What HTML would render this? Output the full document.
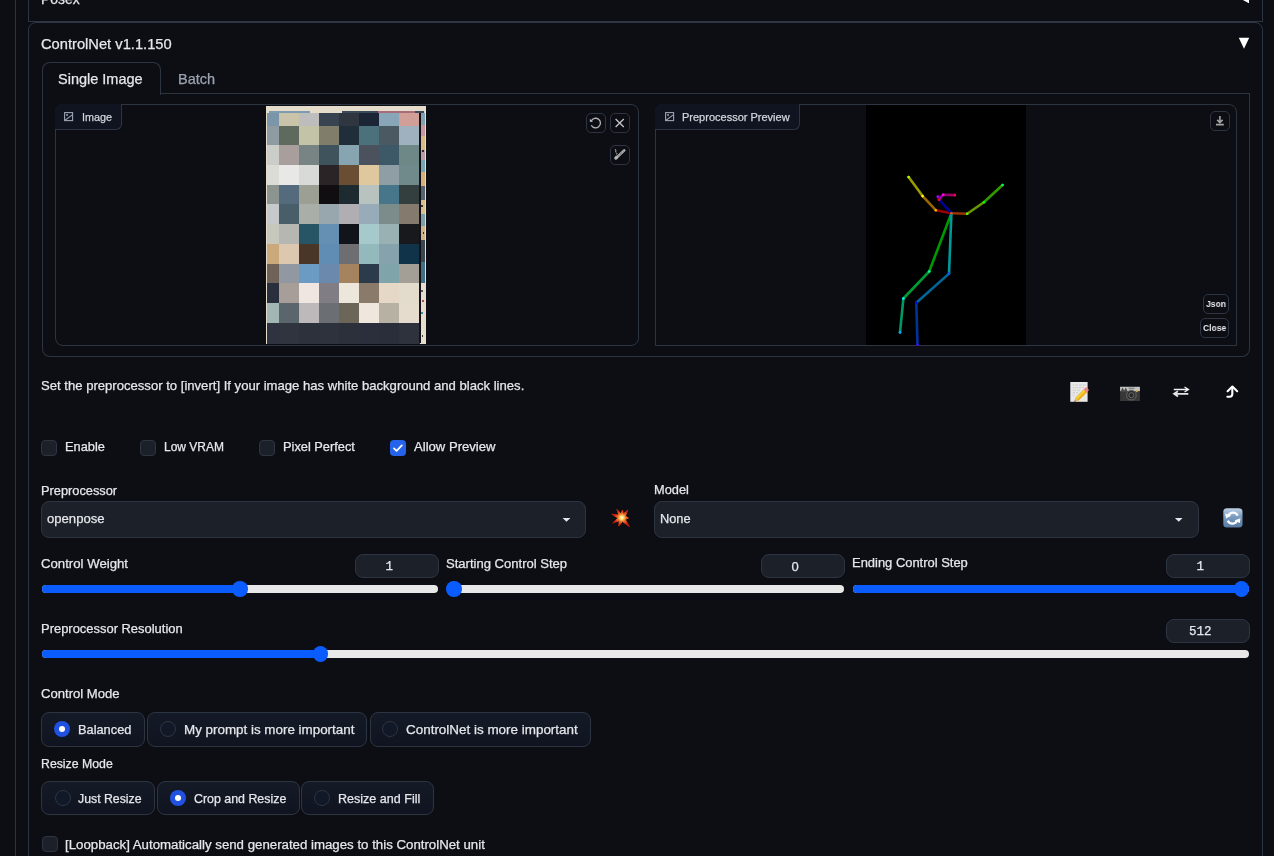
<!DOCTYPE html>
<html><head><meta charset="utf-8">
<style>
*{box-sizing:border-box;margin:0;padding:0}
html,body{width:1274px;height:856px;overflow:hidden;background:#0c0e14}
body{position:relative;font-family:"Liberation Sans",sans-serif;color:#e5e7eb}
.a{position:absolute}
.t{position:absolute;white-space:nowrap;line-height:1;-webkit-text-stroke:0.25px currentColor;will-change:transform}
svg{overflow:visible}
</style></head><body>
<div class="a" style="left:15.0px;top:-10.0px;width:1.0px;height:910.0px;background:#2e3542"></div>
<div class="a" style="left:28.0px;top:-60.0px;width:1235.0px;height:82.0px;border:1px solid #2e3542"></div>
<div class="t" style="left:40.8px;top:-7.5px;font-size:13.9px;color:#e5e7eb;font-weight:400;font-family:'Liberation Sans',sans-serif;">Posex</div>
<svg class="a" style="left:1230px;top:-10px" width="25" height="20" viewBox="1230 -10 25 20"><polygon points="1249,-7 1249,3.2 1239,-2" fill="#fff"/></svg>
<div class="a" style="left:28.0px;top:22.0px;width:1235.0px;height:938.0px;border:1px solid #2e3542;border-radius:8px"></div>
<div class="t" style="left:40.8px;top:36.8px;font-size:14.7px;color:#e5e7eb;font-weight:400;font-family:'Liberation Sans',sans-serif;">ControlNet v1.1.150</div>
<svg class="a" style="left:1230px;top:30px" width="30" height="25" viewBox="1230 30 30 25"><polygon points="1238.8,37.7 1249.2,37.7 1244,48.7" fill="#fff"/></svg>
<div class="a" style="left:41.5px;top:62.0px;width:119.5px;height:32.5px;border:1px solid #2e3542;border-bottom:none;border-radius:8px 8px 0 0;background:#0c0e14"></div>
<div class="a" style="left:160.0px;top:93.0px;width:1090.0px;height:1.0px;background:#2e3542"></div>
<div class="t" style="left:58.3px;top:72.0px;font-size:14.5px;color:#e5e7eb;font-weight:400;font-family:'Liberation Sans',sans-serif;">Single Image</div>
<div class="t" style="left:177.8px;top:72.0px;font-size:14.5px;color:#9ca3af;font-weight:400;font-family:'Liberation Sans',sans-serif;">Batch</div>
<div class="a" style="left:41.5px;top:93.5px;width:1208.5px;height:263.5px;border:1px solid #2e3542;border-top:none;border-radius:0 0 8px 8px"></div>
<div class="a" style="left:54.5px;top:104.0px;width:584.5px;height:242.0px;border:1px solid #2e3542;border-radius:8px;overflow:hidden"></div>
<div class="a" style="left:54.5px;top:104.0px;width:67.5px;height:26.0px;border:1px solid #2e3542;border-top:none;border-left:none;border-radius:8px 0 6px 0;background:#0f1420"></div>
<svg class="a" style="left:63px;top:111px" width="12" height="12" viewBox="63 111 12 12"><rect x="64.6" y="112.6" width="8" height="8" fill="none" stroke="#9ca3af" stroke-width="1.1"/><rect x="66.2" y="114.1" width="1.7" height="1.7" fill="#9ca3af"/><path d="M65 120.2 L72.3 114.9" stroke="#9ca3af" stroke-width="1.1"/></svg>
<div class="t" style="left:82.2px;top:111.9px;font-size:10.8px;color:#d1d5db;font-weight:400;font-family:'Liberation Sans',sans-serif;">Image</div>
<svg class="a" style="left:266px;top:105px" width="161" height="240" viewBox="266 105 161 240" shape-rendering="crispEdges"><rect x="266" y="105.5" width="160" height="238" fill="#e6dccb"/><rect x="267.4" y="112.8" width="11.9" height="13.1" fill="#7b96a8"/><rect x="279" y="112.8" width="20.4" height="13.1" fill="#c9c3aa"/><rect x="299.1" y="112.8" width="20.3" height="13.1" fill="#bdbdbd"/><rect x="319.1" y="112.8" width="20.3" height="13.1" fill="#37444f"/><rect x="339.1" y="112.8" width="20.3" height="13.1" fill="#303640"/><rect x="359.1" y="112.8" width="20.3" height="13.1" fill="#1b2535"/><rect x="379.1" y="112.8" width="20.3" height="13.1" fill="#88a6b8"/><rect x="399.1" y="112.8" width="20.5" height="13.1" fill="#d19e98"/><rect x="267.4" y="125.6" width="11.9" height="20.0" fill="#8e9ba3"/><rect x="279" y="125.6" width="20.4" height="20.0" fill="#5e6a5e"/><rect x="299.1" y="125.6" width="20.3" height="20.0" fill="#c3c3a7"/><rect x="319.1" y="125.6" width="20.3" height="20.0" fill="#807d6b"/><rect x="339.1" y="125.6" width="20.3" height="20.0" fill="#1f2e38"/><rect x="359.1" y="125.6" width="20.3" height="20.0" fill="#4b717c"/><rect x="379.1" y="125.6" width="20.3" height="20.0" fill="#4b5962"/><rect x="399.1" y="125.6" width="20.5" height="20.0" fill="#9fb0bf"/><rect x="267.4" y="145.3" width="11.9" height="20.0" fill="#cbcdc8"/><rect x="279" y="145.3" width="20.4" height="20.0" fill="#a89f9c"/><rect x="299.1" y="145.3" width="20.3" height="20.0" fill="#788484"/><rect x="319.1" y="145.3" width="20.3" height="20.0" fill="#3f535c"/><rect x="339.1" y="145.3" width="20.3" height="20.0" fill="#86a5b1"/><rect x="359.1" y="145.3" width="20.3" height="20.0" fill="#4b525e"/><rect x="379.1" y="145.3" width="20.3" height="20.0" fill="#3d5866"/><rect x="399.1" y="145.3" width="20.5" height="20.0" fill="#6e8888"/><rect x="267.4" y="165.0" width="11.9" height="20.0" fill="#dcdcd6"/><rect x="279" y="165.0" width="20.4" height="20.0" fill="#e8e8e6"/><rect x="299.1" y="165.0" width="20.3" height="20.0" fill="#d8dad8"/><rect x="319.1" y="165.0" width="20.3" height="20.0" fill="#2a2427"/><rect x="339.1" y="165.0" width="20.3" height="20.0" fill="#694e33"/><rect x="359.1" y="165.0" width="20.3" height="20.0" fill="#dfc89e"/><rect x="379.1" y="165.0" width="20.3" height="20.0" fill="#8e9ea4"/><rect x="399.1" y="165.0" width="20.5" height="20.0" fill="#708a8c"/><rect x="267.4" y="184.7" width="11.9" height="20.0" fill="#8c948f"/><rect x="279" y="184.7" width="20.4" height="20.0" fill="#536b7c"/><rect x="299.1" y="184.7" width="20.3" height="20.0" fill="#9c9f93"/><rect x="319.1" y="184.7" width="20.3" height="20.0" fill="#100e11"/><rect x="339.1" y="184.7" width="20.3" height="20.0" fill="#1d2b30"/><rect x="359.1" y="184.7" width="20.3" height="20.0" fill="#b8c2bf"/><rect x="379.1" y="184.7" width="20.3" height="20.0" fill="#47768a"/><rect x="399.1" y="184.7" width="20.5" height="20.0" fill="#333e3e"/><rect x="267.4" y="204.4" width="11.9" height="20.0" fill="#c5c9cb"/><rect x="279" y="204.4" width="20.4" height="20.0" fill="#485f6a"/><rect x="299.1" y="204.4" width="20.3" height="20.0" fill="#a9aea9"/><rect x="319.1" y="204.4" width="20.3" height="20.0" fill="#98a6ae"/><rect x="339.1" y="204.4" width="20.3" height="20.0" fill="#b0adb3"/><rect x="359.1" y="204.4" width="20.3" height="20.0" fill="#97acb8"/><rect x="379.1" y="204.4" width="20.3" height="20.0" fill="#7c8c8a"/><rect x="399.1" y="204.4" width="20.5" height="20.0" fill="#847a6e"/><rect x="267.4" y="224.1" width="11.9" height="20.0" fill="#c6c8bd"/><rect x="279" y="224.1" width="20.4" height="20.0" fill="#b6b7b3"/><rect x="299.1" y="224.1" width="20.3" height="20.0" fill="#285566"/><rect x="319.1" y="224.1" width="20.3" height="20.0" fill="#6590b4"/><rect x="339.1" y="224.1" width="20.3" height="20.0" fill="#11141b"/><rect x="359.1" y="224.1" width="20.3" height="20.0" fill="#a6c9cb"/><rect x="379.1" y="224.1" width="20.3" height="20.0" fill="#9ab1b3"/><rect x="399.1" y="224.1" width="20.5" height="20.0" fill="#18191c"/><rect x="267.4" y="243.8" width="11.9" height="20.0" fill="#cca97a"/><rect x="279" y="243.8" width="20.4" height="20.0" fill="#dcc8ae"/><rect x="299.1" y="243.8" width="20.3" height="20.0" fill="#4a3628"/><rect x="319.1" y="243.8" width="20.3" height="20.0" fill="#5f8db3"/><rect x="339.1" y="243.8" width="20.3" height="20.0" fill="#6e6d72"/><rect x="359.1" y="243.8" width="20.3" height="20.0" fill="#93b9bd"/><rect x="379.1" y="243.8" width="20.3" height="20.0" fill="#86a2ad"/><rect x="399.1" y="243.8" width="20.5" height="20.0" fill="#10334a"/><rect x="267.4" y="263.5" width="11.9" height="20.0" fill="#6f6259"/><rect x="279" y="263.5" width="20.4" height="20.0" fill="#9198a2"/><rect x="299.1" y="263.5" width="20.3" height="20.0" fill="#6b9ac3"/><rect x="319.1" y="263.5" width="20.3" height="20.0" fill="#6b88ad"/><rect x="339.1" y="263.5" width="20.3" height="20.0" fill="#a5835e"/><rect x="359.1" y="263.5" width="20.3" height="20.0" fill="#2b3b4c"/><rect x="379.1" y="263.5" width="20.3" height="20.0" fill="#7fa5aa"/><rect x="399.1" y="263.5" width="20.5" height="20.0" fill="#a39f96"/><rect x="267.4" y="283.2" width="11.9" height="20.0" fill="#2a2f3d"/><rect x="279" y="283.2" width="20.4" height="20.0" fill="#a79e99"/><rect x="299.1" y="283.2" width="20.3" height="20.0" fill="#efe6e1"/><rect x="319.1" y="283.2" width="20.3" height="20.0" fill="#807d84"/><rect x="339.1" y="283.2" width="20.3" height="20.0" fill="#ede6da"/><rect x="359.1" y="283.2" width="20.3" height="20.0" fill="#897a69"/><rect x="379.1" y="283.2" width="20.3" height="20.0" fill="#e5d8c6"/><rect x="399.1" y="283.2" width="20.5" height="20.0" fill="#e3dbcc"/><rect x="267.4" y="302.9" width="11.9" height="20.0" fill="#a2b7b3"/><rect x="279" y="302.9" width="20.4" height="20.0" fill="#5a666c"/><rect x="299.1" y="302.9" width="20.3" height="20.0" fill="#bdb9ba"/><rect x="319.1" y="302.9" width="20.3" height="20.0" fill="#6b6f74"/><rect x="339.1" y="302.9" width="20.3" height="20.0" fill="#6c6658"/><rect x="359.1" y="302.9" width="20.3" height="20.0" fill="#efe7de"/><rect x="379.1" y="302.9" width="20.3" height="20.0" fill="#b7b1a4"/><rect x="399.1" y="302.9" width="20.5" height="20.0" fill="#e6dccd"/><rect x="267.4" y="322.6" width="11.9" height="21.3" fill="#2e333f"/><rect x="279" y="322.6" width="20.4" height="21.3" fill="#30343f"/><rect x="299.1" y="322.6" width="20.3" height="21.3" fill="#2c313b"/><rect x="319.1" y="322.6" width="20.3" height="21.3" fill="#2d323d"/><rect x="339.1" y="322.6" width="20.3" height="21.3" fill="#2b303b"/><rect x="359.1" y="322.6" width="20.3" height="21.3" fill="#2a2f3b"/><rect x="379.1" y="322.6" width="20.3" height="21.3" fill="#292e3a"/><rect x="399.1" y="322.6" width="20.5" height="21.3" fill="#2d323d"/><rect x="269" y="111.2" width="41" height="1.8" fill="#7e9cb0"/><rect x="342" y="111.2" width="82" height="1.8" fill="#3a4a5a"/><rect x="378" y="111.2" width="37" height="1.8" fill="#a86c7a"/><rect x="419.3" y="113" width="1.3" height="230" fill="#141418"/><rect x="420.6" y="113" width="4.2" height="12" fill="#7fa3b2"/><rect x="420.6" y="125" width="4.2" height="11" fill="#c898a2"/><rect x="420.6" y="136" width="4.2" height="14" fill="#d7b98a"/><rect x="420.6" y="150" width="4.2" height="10" fill="#b99ca4"/><rect x="420.6" y="160" width="4.2" height="12" fill="#79a4b3"/><rect x="420.6" y="172" width="4.2" height="14" fill="#d5b27a"/><rect x="420.6" y="186" width="4.2" height="14" fill="#56636e"/><rect x="420.6" y="200" width="4.2" height="14" fill="#d8bf8e"/><rect x="420.6" y="214" width="4.2" height="12" fill="#7e9ea8"/><rect x="420.6" y="226" width="4.2" height="14" fill="#cdb48a"/><rect x="420.6" y="240" width="4.2" height="22" fill="#3b4550"/><rect x="420.6" y="262" width="4.2" height="21" fill="#3f6f84"/><rect x="420.6" y="283" width="4.2" height="60" fill="#e6ddce"/><rect x="424.6" y="111" width="1.4" height="232.6" fill="#e8dccb"/><rect x="421" y="290" width="1.6" height="1.6" fill="#50606a"/><rect x="422" y="300" width="1.6" height="1.6" fill="#a05050"/><rect x="421" y="312" width="1.6" height="1.6" fill="#3a8aa6"/><rect x="421.5" y="335" width="1.6" height="1.6" fill="#404040"/><rect x="422" y="150" width="1.6" height="1.6" fill="#2a2a30"/><rect x="421" y="205" width="1.6" height="1.6" fill="#30343a"/><rect x="422.5" y="232" width="1.6" height="1.6" fill="#2a2e34"/></svg>
<div class="a" style="left:586.0px;top:113.0px;width:20.0px;height:20.0px;border:1px solid #2e3542;border-radius:5px;background:#0c0e14"></div>
<div class="a" style="left:610.0px;top:113.0px;width:20.0px;height:20.0px;border:1px solid #2e3542;border-radius:5px;background:#0c0e14"></div>
<div class="a" style="left:610.0px;top:145.0px;width:20.0px;height:20.0px;border:1px solid #2e3542;border-radius:5px;background:#0c0e14"></div>
<svg class="a" style="left:586px;top:113px" width="20" height="20" viewBox="0 0 20 20"><path d="M5.3 8.0 A4.8 4.8 0 1 1 5.34 12.2" fill="none" stroke="#b4b4bb" stroke-width="1.3"/><polygon points="3.9,5.8 3.9,9.0 7.0,8.8" fill="#b4b4bb"/></svg>
<svg class="a" style="left:610px;top:113px" width="20" height="20" viewBox="0 0 20 20"><path d="M5.6 6.0 L13.8 14.0 M13.8 6.0 L5.6 14.0" stroke="#c4c6cc" stroke-width="1.3"/></svg>
<svg class="a" style="left:610px;top:145px" width="20" height="20" viewBox="0 0 20 20"><path d="M6.6 12.6 L14.2 5.4" stroke="#b4b4b4" stroke-width="2.6" stroke-linecap="round"/><path d="M8.6 10.7 L13.4 6.2" stroke="#1a1a1a" stroke-width="0.9" stroke-dasharray="0.9 1.1"/><ellipse cx="6.2" cy="12.8" rx="2.1" ry="1.8" transform="rotate(-43 6.2 12.8)" fill="#b4b4b4"/><path d="M5.2 4.4 Q6.6 5 5.8 6.2 Q5.2 7.2 6.4 7.8 Q7.4 8.3 6.8 9.2" fill="none" stroke="#b4b4b4" stroke-width="1.0" stroke-linecap="round"/></svg>
<div class="a" style="left:655.0px;top:104.0px;width:582.0px;height:242.0px;border:1px solid #2e3542;border-radius:8px 8px 0 0"></div>
<div class="a" style="left:866.0px;top:105.0px;width:160.0px;height:240.0px;background:#000"></div>
<div class="a" style="left:655.0px;top:104.0px;width:145.0px;height:26.0px;border:1px solid #2e3542;border-top:none;border-left:none;border-radius:8px 0 6px 0;background:#0f1420"></div>
<svg class="a" style="left:664px;top:111px" width="12" height="12" viewBox="664 111 12 12"><rect x="665.6" y="112.6" width="8" height="8" fill="none" stroke="#9ca3af" stroke-width="1.1"/><rect x="667.2" y="114.1" width="1.7" height="1.7" fill="#9ca3af"/><path d="M666 120.2 L673.3 114.9" stroke="#9ca3af" stroke-width="1.1"/></svg>
<div class="t" style="left:682.4px;top:111.7px;font-size:11px;color:#d1d5db;font-weight:400;font-family:'Liberation Sans',sans-serif;">Preprocessor Preview</div>
<svg class="a" style="left:866px;top:105px" width="160" height="240" viewBox="866 105 160 240"><line x1="951.4" y1="213.2" x2="935.8" y2="210.2" stroke="rgb(153,0,0)" stroke-width="2.6" stroke-linecap="round"/><line x1="951.4" y1="213.2" x2="967.2" y2="213.7" stroke="rgb(153,51,0)" stroke-width="2.6" stroke-linecap="round"/><line x1="935.8" y1="210.2" x2="922.6" y2="196.1" stroke="rgb(153,102,0)" stroke-width="2.6" stroke-linecap="round"/><line x1="922.6" y1="196.1" x2="908.6" y2="177.1" stroke="rgb(153,153,0)" stroke-width="2.6" stroke-linecap="round"/><line x1="967.2" y1="213.7" x2="983.9" y2="202.2" stroke="rgb(102,153,0)" stroke-width="2.6" stroke-linecap="round"/><line x1="983.9" y1="202.2" x2="1002.6" y2="185" stroke="rgb(51,153,0)" stroke-width="2.6" stroke-linecap="round"/><line x1="951.4" y1="213.2" x2="929.2" y2="271.5" stroke="rgb(0,153,0)" stroke-width="2.6" stroke-linecap="round"/><line x1="929.2" y1="271.5" x2="903.4" y2="298.5" stroke="rgb(0,153,51)" stroke-width="2.6" stroke-linecap="round"/><line x1="903.4" y1="298.5" x2="900" y2="332.4" stroke="rgb(0,153,102)" stroke-width="2.6" stroke-linecap="round"/><line x1="951.4" y1="213.2" x2="949" y2="273.6" stroke="rgb(0,153,153)" stroke-width="2.6" stroke-linecap="round"/><line x1="949" y1="273.6" x2="916.3" y2="302.8" stroke="rgb(0,102,153)" stroke-width="2.6" stroke-linecap="round"/><line x1="916.3" y1="302.8" x2="917.5" y2="344.6" stroke="rgb(0,51,153)" stroke-width="2.6" stroke-linecap="round"/><line x1="951.4" y1="213.2" x2="939" y2="199.7" stroke="rgb(0,0,153)" stroke-width="2.6" stroke-linecap="round"/><line x1="939" y1="199.7" x2="937.8" y2="196.6" stroke="rgb(51,0,153)" stroke-width="2.6" stroke-linecap="round"/><line x1="939" y1="199.7" x2="943.2" y2="194.7" stroke="rgb(153,0,153)" stroke-width="2.6" stroke-linecap="round"/><line x1="943.2" y1="194.7" x2="954.8" y2="195.1" stroke="rgb(153,0,102)" stroke-width="2.6" stroke-linecap="round"/><circle cx="939" cy="199.7" r="1.3" fill="rgb(255,0,0)"/><circle cx="951.4" cy="213.2" r="1.3" fill="rgb(255,85,0)"/><circle cx="935.8" cy="210.2" r="1.3" fill="rgb(255,170,0)"/><circle cx="922.6" cy="196.1" r="1.3" fill="rgb(255,255,0)"/><circle cx="908.6" cy="177.1" r="1.3" fill="rgb(170,255,0)"/><circle cx="967.2" cy="213.7" r="1.3" fill="rgb(85,255,0)"/><circle cx="983.9" cy="202.2" r="1.3" fill="rgb(0,255,0)"/><circle cx="1002.6" cy="185" r="1.3" fill="rgb(0,255,85)"/><circle cx="929.2" cy="271.5" r="1.3" fill="rgb(0,255,170)"/><circle cx="903.4" cy="298.5" r="1.3" fill="rgb(0,255,255)"/><circle cx="900" cy="332.4" r="1.3" fill="rgb(0,170,255)"/><circle cx="949" cy="273.6" r="1.3" fill="rgb(0,85,255)"/><circle cx="916.3" cy="302.8" r="1.3" fill="rgb(0,0,255)"/><circle cx="917.5" cy="344.6" r="1.3" fill="rgb(85,0,255)"/><circle cx="937.8" cy="196.6" r="1.3" fill="rgb(170,0,255)"/><circle cx="943.2" cy="194.7" r="1.3" fill="rgb(255,0,255)"/><circle cx="954.8" cy="195.1" r="1.3" fill="rgb(255,0,85)"/></svg>
<div class="a" style="left:1210.0px;top:111.0px;width:19.5px;height:20.0px;border:1px solid #2e3542;border-radius:5px;background:#0c0e14"></div>
<svg class="a" style="left:1210px;top:111px" width="20" height="20" viewBox="1210 111 20 20"><path d="M1219.9 116 L1219.9 122.4 M1217.2 119.9 L1219.9 122.6 L1222.6 119.9 M1216 124.6 L1223.8 124.6" fill="none" stroke="#a3a3a3" stroke-width="1.6"/></svg>
<div class="a" style="left:1203.0px;top:294.0px;width:26.0px;height:20.0px;border:1px solid #2e3542;border-radius:5px;background:#0c0e14"></div>
<div class="a" style="left:1200.0px;top:318.0px;width:29.0px;height:20.0px;border:1px solid #2e3542;border-radius:5px;background:#0c0e14"></div>
<div class="t" style="left:1205.8px;top:299.1px;font-size:9.6px;color:#e5e7eb;font-weight:700;font-family:'Liberation Sans',sans-serif;-webkit-text-stroke:0;transform:scaleX(0.89);transform-origin:0 0">Json</div>
<div class="t" style="left:1202.6px;top:322.9px;font-size:9.6px;color:#e5e7eb;font-weight:700;font-family:'Liberation Sans',sans-serif;-webkit-text-stroke:0;transform:scaleX(0.89);transform-origin:0 0">Close</div>
<div class="t" style="left:41.2px;top:378.9px;font-size:13.1px;color:#e5e7eb;font-weight:400;font-family:'Liberation Sans',sans-serif;">Set the preprocessor to [invert] If your image has white background and black lines.</div>
<svg class="a" style="left:1066px;top:378px" width="26" height="28" viewBox="1066 378 26 28"><rect x="1070.3" y="382" width="17.3" height="19.8" fill="#e8e8e8"/><path d="M1072.5 385 H1074.5 M1075.5 385 H1078 M1079 385 H1082 M1083 385 H1085.5 M1072.5 387.6 H1074 M1075 387.6 H1077.5 M1078.5 387.6 H1081 M1082 387.6 H1084 M1072.5 390.2 H1076 M1077 390.2 H1080 M1072.5 392.8 H1075 M1076 392.8 H1078 M1072.5 395.4 H1074.5" stroke="#c2c2c2" stroke-width="0.7"/><path d="M1076.5 399.8 L1085.6 390.6" stroke="#e9b21c" stroke-width="4.4"/><path d="M1076.2 399.0 L1085.0 390.1" stroke="#f7d23a" stroke-width="1.6"/><path d="M1085.2 391 L1087.6 388.6" stroke="#e88585" stroke-width="4.2"/><polygon points="1074.4,401.8 1075.0,398.0 1078.2,401.2" fill="#d9b890"/><polygon points="1074.4,401.8 1074.7,400.2 1076.0,401.5" fill="#333"/></svg>
<svg class="a" style="left:1118px;top:384px" width="24" height="20" viewBox="1118 384 24 20"><rect x="1120.1" y="386.8" width="19.8" height="14.2" fill="#383838"/><rect x="1120.1" y="386.8" width="19.8" height="4.3" fill="#c4c4c4"/><polygon points="1120.6,391.2 1122.6,387.6 1124.4,391.2" fill="#4a4a4a"/><polygon points="1123.8,391.2 1125.8,387.6 1127.6,391.2" fill="#4a4a4a"/><rect x="1128.6" y="387.6" width="6" height="1.6" fill="#8a8a8a"/><circle cx="1131.4" cy="395.2" r="5.4" fill="#5e5e5e"/><circle cx="1131.4" cy="395.2" r="4.1" fill="#2a2a2a"/><circle cx="1131.4" cy="395.2" r="2.6" fill="none" stroke="#707070" stroke-width="0.9"/><circle cx="1136.8" cy="391.2" r="1" fill="#d0a830"/></svg>
<svg class="a" style="left:1170px;top:382px" width="22" height="18" viewBox="1170 382 22 18"><path d="M1173.8 389.5 H1188.3 M1184.5 387 L1188.5 389.5 L1184.5 392" fill="none" stroke="#f0f0f0" stroke-width="1.3"/><path d="M1174.2 393.8 H1188.3 M1178 391.2 L1174 393.8 L1178 396.5" fill="none" stroke="#e6e6e6" stroke-width="1.7"/></svg>
<svg class="a" style="left:1222px;top:382px" width="20" height="20" viewBox="1222 382 20 20"><path d="M1227.6 391.2 L1232.4 386.6 L1237.2 391.2" fill="none" stroke="#fff" stroke-width="2.1" stroke-linecap="round" stroke-linejoin="round"/><path d="M1232.3 387 V394 Q1232.3 396.6 1229.6 396.8 H1227.4" fill="none" stroke="#fff" stroke-width="2.1" stroke-linecap="round"/></svg>
<div class="a" style="left:41.2px;top:440.2px;width:16.0px;height:16.0px;background:#1b2029;border:1px solid #2e3542;border-radius:4px"></div>
<div class="t" style="left:65.2px;top:440.6px;font-size:12.8px;color:#e5e7eb;font-weight:400;font-family:'Liberation Sans',sans-serif;">Enable</div>
<div class="a" style="left:140.2px;top:440.2px;width:16.0px;height:16.0px;background:#1b2029;border:1px solid #2e3542;border-radius:4px"></div>
<div class="t" style="left:164.2px;top:441.2px;font-size:12.0px;color:#e5e7eb;font-weight:400;font-family:'Liberation Sans',sans-serif;">Low VRAM</div>
<div class="a" style="left:259.2px;top:440.2px;width:16.0px;height:16.0px;background:#1b2029;border:1px solid #2e3542;border-radius:4px"></div>
<div class="t" style="left:283.2px;top:440.6px;font-size:12.8px;color:#e5e7eb;font-weight:400;font-family:'Liberation Sans',sans-serif;">Pixel Perfect</div>
<div class="a" style="left:390.0px;top:440.2px;width:16.0px;height:16.0px;background:#2563eb;border-radius:4px"></div>
<svg class="a" style="left:390px;top:440.2px" width="16" height="16" viewBox="0 0 16 16"><path d="M4 8.4 L6.6 10.8 L11.8 5.4" fill="none" stroke="#fff" stroke-width="1.8" stroke-linecap="round" stroke-linejoin="round"/></svg>
<div class="t" style="left:413.7px;top:440.3px;font-size:13.1px;color:#e5e7eb;font-weight:400;font-family:'Liberation Sans',sans-serif;">Allow Preview</div>
<div class="t" style="left:41.0px;top:484.9px;font-size:12.8px;color:#e5e7eb;font-weight:400;font-family:'Liberation Sans',sans-serif;">Preprocessor</div>
<div class="a" style="left:40.6px;top:501.0px;width:545.0px;height:36.5px;background:#1b2029;border:1px solid #2e3542;border-radius:8px"></div>
<div class="t" style="left:47.4px;top:512.4px;font-size:13.1px;color:#e5e7eb;font-weight:400;font-family:'Liberation Sans',sans-serif;">openpose</div>
<svg class="a" style="left:560px;top:515px" width="14" height="10" viewBox="560 515 14 10"><polygon points="562.6,518 570.4,518 566.5,521.8" fill="#e5e7eb"/></svg>
<div class="t" style="left:653.8px;top:484.0px;font-size:12.8px;color:#e5e7eb;font-weight:400;font-family:'Liberation Sans',sans-serif;">Model</div>
<div class="a" style="left:654.0px;top:501.0px;width:544.6px;height:36.5px;background:#1b2029;border:1px solid #2e3542;border-radius:8px"></div>
<div class="t" style="left:660.0px;top:512.9px;font-size:12.8px;color:#e5e7eb;font-weight:400;font-family:'Liberation Sans',sans-serif;">None</div>
<svg class="a" style="left:1172px;top:515px" width="14" height="10" viewBox="1172 515 14 10"><polygon points="1174.9,518 1182.6,518 1178.75,521.8" fill="#e5e7eb"/></svg>
<svg class="a" style="left:606px;top:504px" width="30" height="28" viewBox="606 504 30 28"><defs><radialGradient id="ex" cx="621.8" cy="517.7" r="11" gradientUnits="userSpaceOnUse"><stop offset="0" stop-color="#fff"/><stop offset="0.15" stop-color="#ffe070"/><stop offset="0.35" stop-color="#f07a30"/><stop offset="0.7" stop-color="#d4200c"/><stop offset="1" stop-color="#b01008"/></radialGradient></defs><polygon points="616.9,509.3 621.0,514.0 622.5,510.0 623.2,514.2 627.8,510.0 625.3,516.1 628.5,518.1 625.2,519.4 629.5,526.8 622.5,521.4 618.7,526.1 619.4,520.6 612.7,523.0 618.0,518.1 611.7,514.2 618.9,515.3" fill="url(#ex)" stroke="url(#ex)" stroke-width="1" stroke-linejoin="round" style="filter:blur(0.3px)"/></svg>
<svg class="a" style="left:1222px;top:507px" width="22" height="22" viewBox="1222 507 22 22"><defs><linearGradient id="rg" x1="0" y1="0" x2="0" y2="1"><stop offset="0" stop-color="#bcd0e4"/><stop offset="0.45" stop-color="#7a9cc2"/><stop offset="1" stop-color="#5878a0"/></linearGradient></defs><rect x="1223.3" y="508.3" width="19.2" height="19.2" rx="3.5" fill="url(#rg)"/><path d="M1228.2 516.2 A5 5 0 0 1 1237.6 515.6" fill="none" stroke="#fff" stroke-width="2.3"/><path d="M1237.2 520.0 A5 5 0 0 1 1227.8 520.6" fill="none" stroke="#fff" stroke-width="2.3"/><polygon points="1225.4,513.6 1231.2,515.6 1226.0,518.6" fill="#fff"/><polygon points="1240.4,518.2 1239.8,523.0 1234.6,520.4" fill="#fff"/></svg>
<div class="t" style="left:41.2px;top:556.8px;font-size:13.2px;color:#e5e7eb;font-weight:400;font-family:'Liberation Sans',sans-serif;">Control Weight</div>
<div class="a" style="left:355.4px;top:554.1px;width:83.5px;height:23.6px;background:#1b2029;border:1px solid #2e3542;border-radius:8px"></div>
<div class="t" style="left:355.4px;top:555.6px;width:83.5px;height:23.6px;line-height:23.6px;text-align:center;padding-right:15px;font-family:'Liberation Mono',monospace;font-size:12.5px;color:#e5e7eb">1</div>
<div class="a" style="left:42.0px;top:585.0px;width:396.0px;height:8.0px;background:#e8e8e8;border-radius:4px"></div>
<div class="a" style="left:42.0px;top:585.0px;width:198.0px;height:8.0px;background:#0b5cff;border-radius:4px 0 0 4px"></div>
<div class="a" style="left:232.3px;top:581.3px;width:15.4px;height:15.4px;background:#0b5cff;border-radius:50%"></div>
<div class="t" style="left:446.2px;top:557.0px;font-size:13.05px;color:#e5e7eb;font-weight:400;font-family:'Liberation Sans',sans-serif;">Starting Control Step</div>
<div class="a" style="left:761.2px;top:554.1px;width:83.4px;height:23.6px;background:#1b2029;border:1px solid #2e3542;border-radius:8px"></div>
<div class="t" style="left:761.2px;top:555.6px;width:83.4px;height:23.6px;line-height:23.6px;text-align:center;padding-right:15px;font-family:'Liberation Mono',monospace;font-size:12.5px;color:#e5e7eb"><span style='font-family:Liberation Sans;font-size:13px;position:relative;top:-1px'>0</span></div>
<div class="a" style="left:446.5px;top:585.0px;width:397.5px;height:8.0px;background:#e8e8e8;border-radius:4px"></div>
<div class="a" style="left:446.5px;top:585.0px;width:7.5px;height:8.0px;background:#0b5cff;border-radius:4px 0 0 4px"></div>
<div class="a" style="left:446.3px;top:581.3px;width:15.4px;height:15.4px;background:#0b5cff;border-radius:50%"></div>
<div class="t" style="left:851.8px;top:557.0px;font-size:12.95px;color:#e5e7eb;font-weight:400;font-family:'Liberation Sans',sans-serif;">Ending Control Step</div>
<div class="a" style="left:1166.2px;top:554.1px;width:83.5px;height:23.6px;background:#1b2029;border:1px solid #2e3542;border-radius:8px"></div>
<div class="t" style="left:1166.2px;top:555.6px;width:83.5px;height:23.6px;line-height:23.6px;text-align:center;padding-right:15px;font-family:'Liberation Mono',monospace;font-size:12.5px;color:#e5e7eb">1</div>
<div class="a" style="left:852.7px;top:585.0px;width:396.6px;height:8.0px;background:#e8e8e8;border-radius:4px"></div>
<div class="a" style="left:852.7px;top:585.0px;width:389.1px;height:8.0px;background:#0b5cff;border-radius:4px 0 0 4px"></div>
<div class="a" style="left:1234.1px;top:581.3px;width:15.4px;height:15.4px;background:#0b5cff;border-radius:50%"></div>
<div class="t" style="left:41.2px;top:622.8px;font-size:12.95px;color:#e5e7eb;font-weight:400;font-family:'Liberation Sans',sans-serif;">Preprocessor Resolution</div>
<div class="a" style="left:1166.2px;top:619.1px;width:83.5px;height:23.7px;background:#1b2029;border:1px solid #2e3542;border-radius:8px"></div>
<div class="t" style="left:1166.2px;top:620.6px;width:83.5px;height:23.7px;line-height:23.7px;text-align:center;padding-right:15px;font-family:'Liberation Mono',monospace;font-size:12.5px;color:#e5e7eb">512</div>
<div class="a" style="left:42.0px;top:650.0px;width:1207.0px;height:8.0px;background:#e8e8e8;border-radius:4px"></div>
<div class="a" style="left:42.0px;top:650.0px;width:278.2px;height:8.0px;background:#0b5cff;border-radius:4px 0 0 4px"></div>
<div class="a" style="left:312.5px;top:646.3px;width:15.4px;height:15.4px;background:#0b5cff;border-radius:50%"></div>
<div class="t" style="left:41.0px;top:687.3px;font-size:13.1px;color:#e5e7eb;font-weight:400;font-family:'Liberation Sans',sans-serif;">Control Mode</div>
<div class="a" style="left:41.2px;top:712.0px;width:103.9px;height:34.7px;border:1px solid #2e3542;border-radius:8px;background:linear-gradient(#141a26,#0f1420)"></div>
<div class="a" style="left:54.0px;top:721.4px;width:16.0px;height:16.0px;background:#2151e0;border-radius:50%"></div>
<div class="a" style="left:58.8px;top:726.1px;width:6.4px;height:6.4px;background:#fff;border-radius:50%"></div>
<div class="t" style="left:78.3px;top:723.6px;font-size:12.8px;color:#e5e7eb;font-weight:400;font-family:'Liberation Sans',sans-serif;">Balanced</div>
<div class="a" style="left:147.3px;top:712.0px;width:220.1px;height:34.7px;border:1px solid #2e3542;border-radius:8px;background:linear-gradient(#141a26,#0f1420)"></div>
<div class="a" style="left:160.0px;top:721.4px;width:16.0px;height:16.0px;background:#111827;border:1px solid #2e3542;border-radius:50%"></div>
<div class="t" style="left:183.5px;top:723.1px;font-size:13.4px;color:#e5e7eb;font-weight:400;font-family:'Liberation Sans',sans-serif;">My prompt is more important</div>
<div class="a" style="left:369.6px;top:712.0px;width:221.7px;height:34.7px;border:1px solid #2e3542;border-radius:8px;background:linear-gradient(#141a26,#0f1420)"></div>
<div class="a" style="left:382.0px;top:721.4px;width:16.0px;height:16.0px;background:#111827;border:1px solid #2e3542;border-radius:50%"></div>
<div class="t" style="left:405.9px;top:723.0px;font-size:13.45px;color:#e5e7eb;font-weight:400;font-family:'Liberation Sans',sans-serif;">ControlNet is more important</div>
<div class="t" style="left:41.0px;top:757.7px;font-size:12.3px;color:#e5e7eb;font-weight:400;font-family:'Liberation Sans',sans-serif;">Resize Mode</div>
<div class="a" style="left:40.9px;top:781.3px;width:113.7px;height:34.0px;border:1px solid #2e3542;border-radius:8px;background:linear-gradient(#141a26,#0f1420)"></div>
<div class="a" style="left:54.7px;top:790.3px;width:16.0px;height:16.0px;background:#111827;border:1px solid #2e3542;border-radius:50%"></div>
<div class="t" style="left:78.3px;top:793.1px;font-size:12.3px;color:#e5e7eb;font-weight:400;font-family:'Liberation Sans',sans-serif;">Just Resize</div>
<div class="a" style="left:157.3px;top:781.3px;width:142.4px;height:34.0px;border:1px solid #2e3542;border-radius:8px;background:linear-gradient(#141a26,#0f1420)"></div>
<div class="a" style="left:170.1px;top:790.3px;width:16.0px;height:16.0px;background:#2151e0;border-radius:50%"></div>
<div class="a" style="left:174.9px;top:795.1px;width:6.4px;height:6.4px;background:#fff;border-radius:50%"></div>
<div class="t" style="left:193.7px;top:793.0px;font-size:12.4px;color:#e5e7eb;font-weight:400;font-family:'Liberation Sans',sans-serif;">Crop and Resize</div>
<div class="a" style="left:301.3px;top:781.3px;width:132.6px;height:34.0px;border:1px solid #2e3542;border-radius:8px;background:linear-gradient(#141a26,#0f1420)"></div>
<div class="a" style="left:314.2px;top:790.3px;width:16.0px;height:16.0px;background:#111827;border:1px solid #2e3542;border-radius:50%"></div>
<div class="t" style="left:337.8px;top:792.9px;font-size:12.55px;color:#e5e7eb;font-weight:400;font-family:'Liberation Sans',sans-serif;">Resize and Fill</div>
<div class="a" style="left:41.5px;top:836.4px;width:16.0px;height:16.0px;background:#1b2029;border:1px solid #2e3542;border-radius:4px"></div>
<div class="t" style="left:65.0px;top:837.8px;font-size:13.25px;color:#e5e7eb;font-weight:400;font-family:'Liberation Sans',sans-serif;">[Loopback] Automatically send generated images to this ControlNet unit</div>
</body></html>
